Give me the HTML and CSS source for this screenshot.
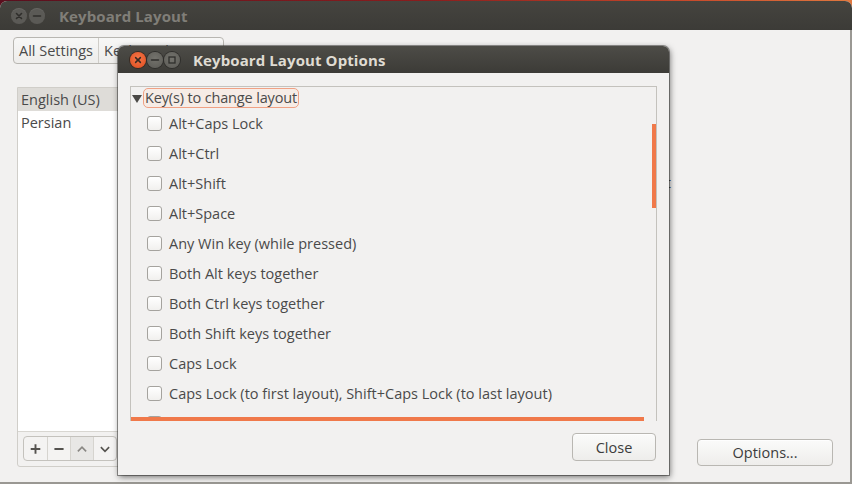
FILE: index.html
```html
<!DOCTYPE html>
<html>
<head>
<meta charset="utf-8">
<link rel="stylesheet" href="styles.css">
</head>
<body>
<div class="desktop">
  <div class="window">
    <div class="titlebar">
      <span class="wbtn inactive"><svg viewBox="0 0 16 16" width="16" height="16"><path d="M5.5 5.5 L10.5 10.5 M10.5 5.5 L5.5 10.5" stroke="#2f2e2b" stroke-width="1.6" stroke-linecap="round"/></svg></span>
      <span class="wbtn inactive"><svg viewBox="0 0 16 16" width="16" height="16"><path d="M4.5 8 H11.5" stroke="#2f2e2b" stroke-width="1.6" stroke-linecap="round"/></svg></span>
      <span class="wtitle inactive-title">Keyboard Layout</span>
    </div>
    <div class="content">
      <div class="crumbs">
        <span class="crumb">All Settings</span>
        <span class="crumb">Keyboard Layout</span>
      </div>
      <div class="main">
        <div class="listpane">
          <div class="list">
            <div class="row sel">English (US)</div>
            <div class="row">Persian</div>
          </div>
          <div class="toolbar">
            <div class="tbtns">
              <span class="tbtn"><svg viewBox="0 0 24 24" width="24" height="24"><path d="M7 12 H17 M12 7 V17" stroke="#55534f" stroke-width="2"/></svg></span>
              <span class="tbtn"><svg viewBox="0 0 24 24" width="24" height="24"><path d="M7 12 H17" stroke="#55534f" stroke-width="2"/></svg></span>
              <span class="tbtn dim"><svg viewBox="0 0 24 24" width="24" height="24"><path d="M7.5 14.5 L12 10 L16.5 14.5" fill="none" stroke="#8a8884" stroke-width="1.8"/></svg></span>
              <span class="tbtn"><svg viewBox="0 0 24 24" width="24" height="24"><path d="M7.5 10 L12 14.5 L16.5 10" fill="none" stroke="#55534f" stroke-width="1.8"/></svg></span>
            </div>
          </div>
        </div>
        <div class="rightpane">
          <div class="hint">Show current layout</div>
          <div class="optrow"><button class="btn options">Options...</button></div>
        </div>
      </div>
    </div>
  </div>

  <div class="dialog">
    <div class="titlebar dtitle">
      <span class="wbtn close"><svg viewBox="0 0 16 16" width="16" height="16"><path d="M5.6 5.6 L10.4 10.4 M10.4 5.6 L5.6 10.4" stroke="#3a2a22" stroke-width="1.5" stroke-linecap="round"/></svg></span>
      <span class="wbtn grey"><svg viewBox="0 0 16 16" width="16" height="16"><path d="M4.5 8 H11.5" stroke="#2f2e2b" stroke-width="1.5" stroke-linecap="round"/></svg></span>
      <span class="wbtn grey"><svg viewBox="0 0 16 16" width="16" height="16"><rect x="5" y="5" width="6" height="6" fill="none" stroke="#2f2e2b" stroke-width="1.3"/></svg></span>
      <span class="wtitle active-title">Keyboard Layout Options</span>
    </div>
    <div class="dcontent">
      <div class="frame">
        <div class="expander">
          <span class="arrow"></span>
          <span class="explabel">Key(s) to change layout</span>
        </div>
        <div class="items">
          <label class="item"><span class="cb"></span>Alt+Caps Lock</label>
          <label class="item"><span class="cb"></span>Alt+Ctrl</label>
          <label class="item"><span class="cb"></span>Alt+Shift</label>
          <label class="item"><span class="cb"></span>Alt+Space</label>
          <label class="item"><span class="cb"></span>Any Win key (while pressed)</label>
          <label class="item"><span class="cb"></span>Both Alt keys together</label>
          <label class="item"><span class="cb"></span>Both Ctrl keys together</label>
          <label class="item"><span class="cb"></span>Both Shift keys together</label>
          <label class="item"><span class="cb"></span>Caps Lock</label>
          <label class="item"><span class="cb"></span>Caps Lock (to first layout), Shift+Caps Lock (to last layout)</label>
          <label class="item"><span class="cb"></span>Caps Lock (while pressed)</label>
        </div>
        <div class="scrollbar"></div>
        <div class="edge"></div>
      </div>
      <div class="dbuttons"><button class="btn close-btn">Close</button></div>
    </div>
  </div>
</div>
</body>
</html>
```
FILE: styles.css
```css
* { box-sizing: border-box; }
html, body { margin: 0; padding: 0; }
body {
  width: 852px; height: 484px; overflow: hidden;
  font-family: "Open Sans", "DejaVu Sans", sans-serif;
  font-size: 14px; color: #3c3c3c;
}
.desktop {
  position: relative; width: 852px; height: 484px;
  background: linear-gradient(90deg, #5a0f1e 0%, #8a1d1d 50%, #c7482a 80%, #e0783f 100%);
  padding-top: 1px;
}
.window {
  height: 483px; display: flex; flex-direction: column;
  border-radius: 7px 7px 0 0; overflow: hidden;
  background: #f2f1f0;
}
.titlebar {
  height: 29px; flex: none;
  background: linear-gradient(#45443f, #3c3b37);
  display: flex; align-items: center; padding-left: 11px; gap: 2px;
}
.wbtn {
  width: 16px; height: 16px; border-radius: 50%;
  display: inline-flex; align-items: center; justify-content: center;
}
.wbtn svg { display: block; }
.wbtn.inactive { background: #5b5a56; box-shadow: inset 0 1px 0 rgba(255,255,255,0.08); }
.wtitle { font-weight: bold; font-size: 15px; margin-left: 12px; letter-spacing: 0.1px; }
.inactive-title { color: #807e78; }
.active-title { color: #dfdbd2; margin-left: 12px; }
.content {
  flex: 1; position: relative;
  border-right: 2px solid #9a9893; border-bottom: 2px solid #9a9893;
  padding: 7px 0 0 13px;
}
.crumbs {
  display: inline-flex; height: 27px;
  border: 1px solid #b8b6b1; border-radius: 4px;
  background: linear-gradient(#f7f7f6, #eeedeb);
}
.crumb { padding: 0 5px; line-height: 25px; font-size: 14.5px; color: #4a4a4a; }
.crumb + .crumb { border-left: 1px solid #cfcdc8; }
.main { display: flex; margin-top: 23px; padding-left: 4px; }
.listpane {
  width: 220px; height: 380px; display: flex; flex-direction: column;
  border: 1px solid #d0cec9; border-radius: 0 0 3px 3px;
}
.list { flex: 1; background: #ffffff; padding-top: 0; border-bottom: 1px solid #d8d6d1; }
.row { height: 23px; line-height: 23px; padding-left: 3px; font-size: 14.5px; color: #4a4a4a; }
.row.sel { background: #dedcd8; }
.toolbar { height: 34px; padding: 4px 0 0 5px; }
.tbtns {
  display: inline-flex; height: 25px;
  border: 1px solid #c4c2bd; border-radius: 4px; overflow: hidden;
  background: #f4f3f2;
}
.tbtn { width: 23px; display: flex; align-items: center; justify-content: center; }
.tbtn + .tbtn { border-left: 1px solid #d6d4cf; }
.tbtn.dim { background: #e8e7e5; }
.rightpane { flex: 1; display: flex; flex-direction: column; }
.hint { text-align: right; padding-right: 179px; margin-top: 86px; line-height: 20px; font-size: 14.5px; color: #4a4a4a; white-space: nowrap; overflow: hidden; }
.optrow { margin-top: auto; display: flex; justify-content: flex-end; padding-right: 17px; }
.btn {
  font-family: inherit; font-size: 14.5px; color: #3c3c3c;
  border: 1px solid #b9b7b2; border-radius: 4px;
  background: linear-gradient(#fbfbfa, #eeedeb);
  box-shadow: 0 1px 0 rgba(255,255,255,0.8) inset;
  padding: 0;
}
.options { width: 136px; height: 27px; margin-bottom: 1px; }

.dialog {
  position: absolute; left: 118px; top: 46px; width: 551px; height: 429px;
  background: #f2f1f0; border-radius: 6px 6px 0 0;
  box-shadow: 1px 2px 6px rgba(0,0,0,0.55), 0 0 0 1px rgba(60,59,55,0.5);
  display: flex; flex-direction: column;
}
.dtitle { height: 27px; border-radius: 6px 6px 0 0; padding-left: 12px; gap: 1px; background: linear-gradient(#4d4c47, #3c3b37); }
.wbtn.close { background: radial-gradient(circle at 50% 40%, #f5784a, #df4a1c); box-shadow: 0 0 0 1px #3a2a22; }
.wbtn.grey { background: radial-gradient(circle at 50% 40%, #74736d, #5b5a55); box-shadow: 0 0 0 1px #2f2e2b; }
.dcontent { flex: 1; padding: 13px 12px 0 12px; display: flex; flex-direction: column; }
.frame {
  position: relative; height: 335px; width: 527px; flex: none;
  border: 1px solid #c4c2bd; border-bottom: none; overflow: hidden;
}
.expander { display: flex; align-items: center; height: 20px; margin-top: 1px; padding-left: 1px; }
.arrow {
  width: 0; height: 0; border-left: 5px solid transparent; border-right: 5px solid transparent;
  border-top: 8px solid #4a4946; margin-right: 1px; margin-top: 1px;
}
.explabel {
  border: 1px solid #f0a184; border-radius: 5px; background: #f6ece6;
  padding: 0 1px; line-height: 18px; font-size: 14.5px; color: #4a4a4a; letter-spacing: -0.15px;
}
.items { padding-left: 16px; padding-top: 0; }
.item { display: flex; align-items: center; height: 30px; white-space: nowrap; font-size: 14.5px; color: #4a4a4a; }
.cb {
  width: 15px; height: 15px; border: 1px solid #a5a39e; border-radius: 3px;
  background: linear-gradient(#ffffff, #f1f0ee); margin-right: 7px; flex: none;
}
.scrollbar { position: absolute; right: 0; top: 37px; width: 4px; height: 84px; background: #f0794a; }
.edge { position: absolute; left: 0; bottom: 0; width: 513px; height: 4px; background: #f0794a; }
.dbuttons { display: flex; justify-content: flex-end; padding-top: 12px; padding-right: 1px; }
.close-btn { width: 84px; height: 28px; }
```
